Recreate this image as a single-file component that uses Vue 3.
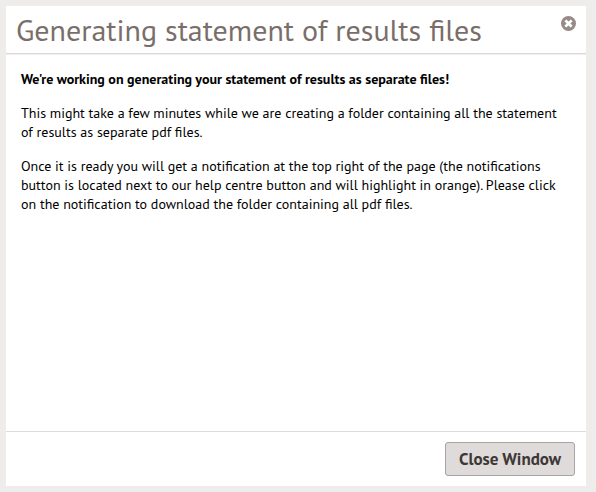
<template>
  <div class="page">
    <section class="modal" role="dialog" aria-modal="true" aria-labelledby="modal-title">
      <header class="modal-header">
        <h2 id="modal-title">{{ title }}</h2>
        <button class="icon-button" type="button" aria-label="Close dialog" @click="close">
          <svg viewBox="0 0 15 15" width="15" height="15" aria-hidden="true">
            <circle cx="7.5" cy="7.5" r="7.5" fill="#968b87" />
            <path d="M5.3 5.3l4.4 4.4M9.7 5.3l-4.4 4.4" stroke="#fff" stroke-width="2.7" stroke-linecap="square" />
          </svg>
        </button>
      </header>

      <div class="modal-body">
        <p class="lead">We're working on generating your statement of results as separate files!</p>
        <p>
          This might take a few minutes while we are creating a folder containing all the statement<br />
          of results as separate pdf files.
        </p>
        <p>
          Once it is ready you will get a notification at the top right of the page (the notifications<br />
          button is located next to our help centre button and will highlight in orange). Please click<br />
          on the notification to download the folder containing all pdf files.
        </p>
      </div>

      <footer class="modal-footer">
        <button class="button" type="button" @click="close">Close Window</button>
      </footer>
    </section>
  </div>
</template>

<script setup>
defineProps({
  title: {
    type: String,
    default: 'Generating statement of results files'
  }
})

const emit = defineEmits(['close'])

const close = () => emit('close')
</script>

<style>
body {
  margin: 0;
  background: #eeedeb;
}
</style>

<style scoped>
.page {
  box-sizing: border-box;
  height: 492px;
  padding: 6px 10px 6px 6px;
  background: #eeedeb;
  font-family: 'PT Sans', 'Noto Sans', sans-serif;
}

.modal {
  display: flex;
  flex-direction: column;
  height: 100%;
  background: #fff;
}

.modal-header {
  box-sizing: border-box;
  display: flex;
  align-items: flex-start;
  justify-content: space-between;
  height: 48px;
  padding: 0 10px;
  border-bottom: 1px solid #dcd8d8;
  box-shadow: 0 1px 0 #efeded;
}

.modal-header h2 {
  margin: 0;
  color: #796e69;
  font-size: 30px;
  font-weight: 400;
  line-height: 47px;
  white-space: nowrap;
}

.icon-button {
  display: flex;
  margin: 10px 0 0;
  padding: 0;
  border: none;
  background: transparent;
  cursor: pointer;
}

.modal-body {
  flex: 1;
  padding: 16px 15px 15px;
  color: #000;
  font-size: 14px;
  line-height: 19px;
  white-space: nowrap;
}

.modal-body p {
  margin: 0 0 15px;
}

.modal-body .lead {
  font-weight: 700;
}

.modal-footer {
  box-sizing: border-box;
  display: flex;
  justify-content: flex-end;
  height: 55px;
  padding: 10px 11px;
  border-top: 1px solid #dbdbdb;
}

.button {
  box-sizing: border-box;
  width: 130px;
  height: 34px;
  padding: 0;
  border: 1px solid #a9a4a3;
  border-radius: 3px;
  background: #dfdbda;
  color: #3d3835;
  font-family: inherit;
  font-size: 17px;
  font-weight: 700;
  cursor: pointer;
}
</style>
